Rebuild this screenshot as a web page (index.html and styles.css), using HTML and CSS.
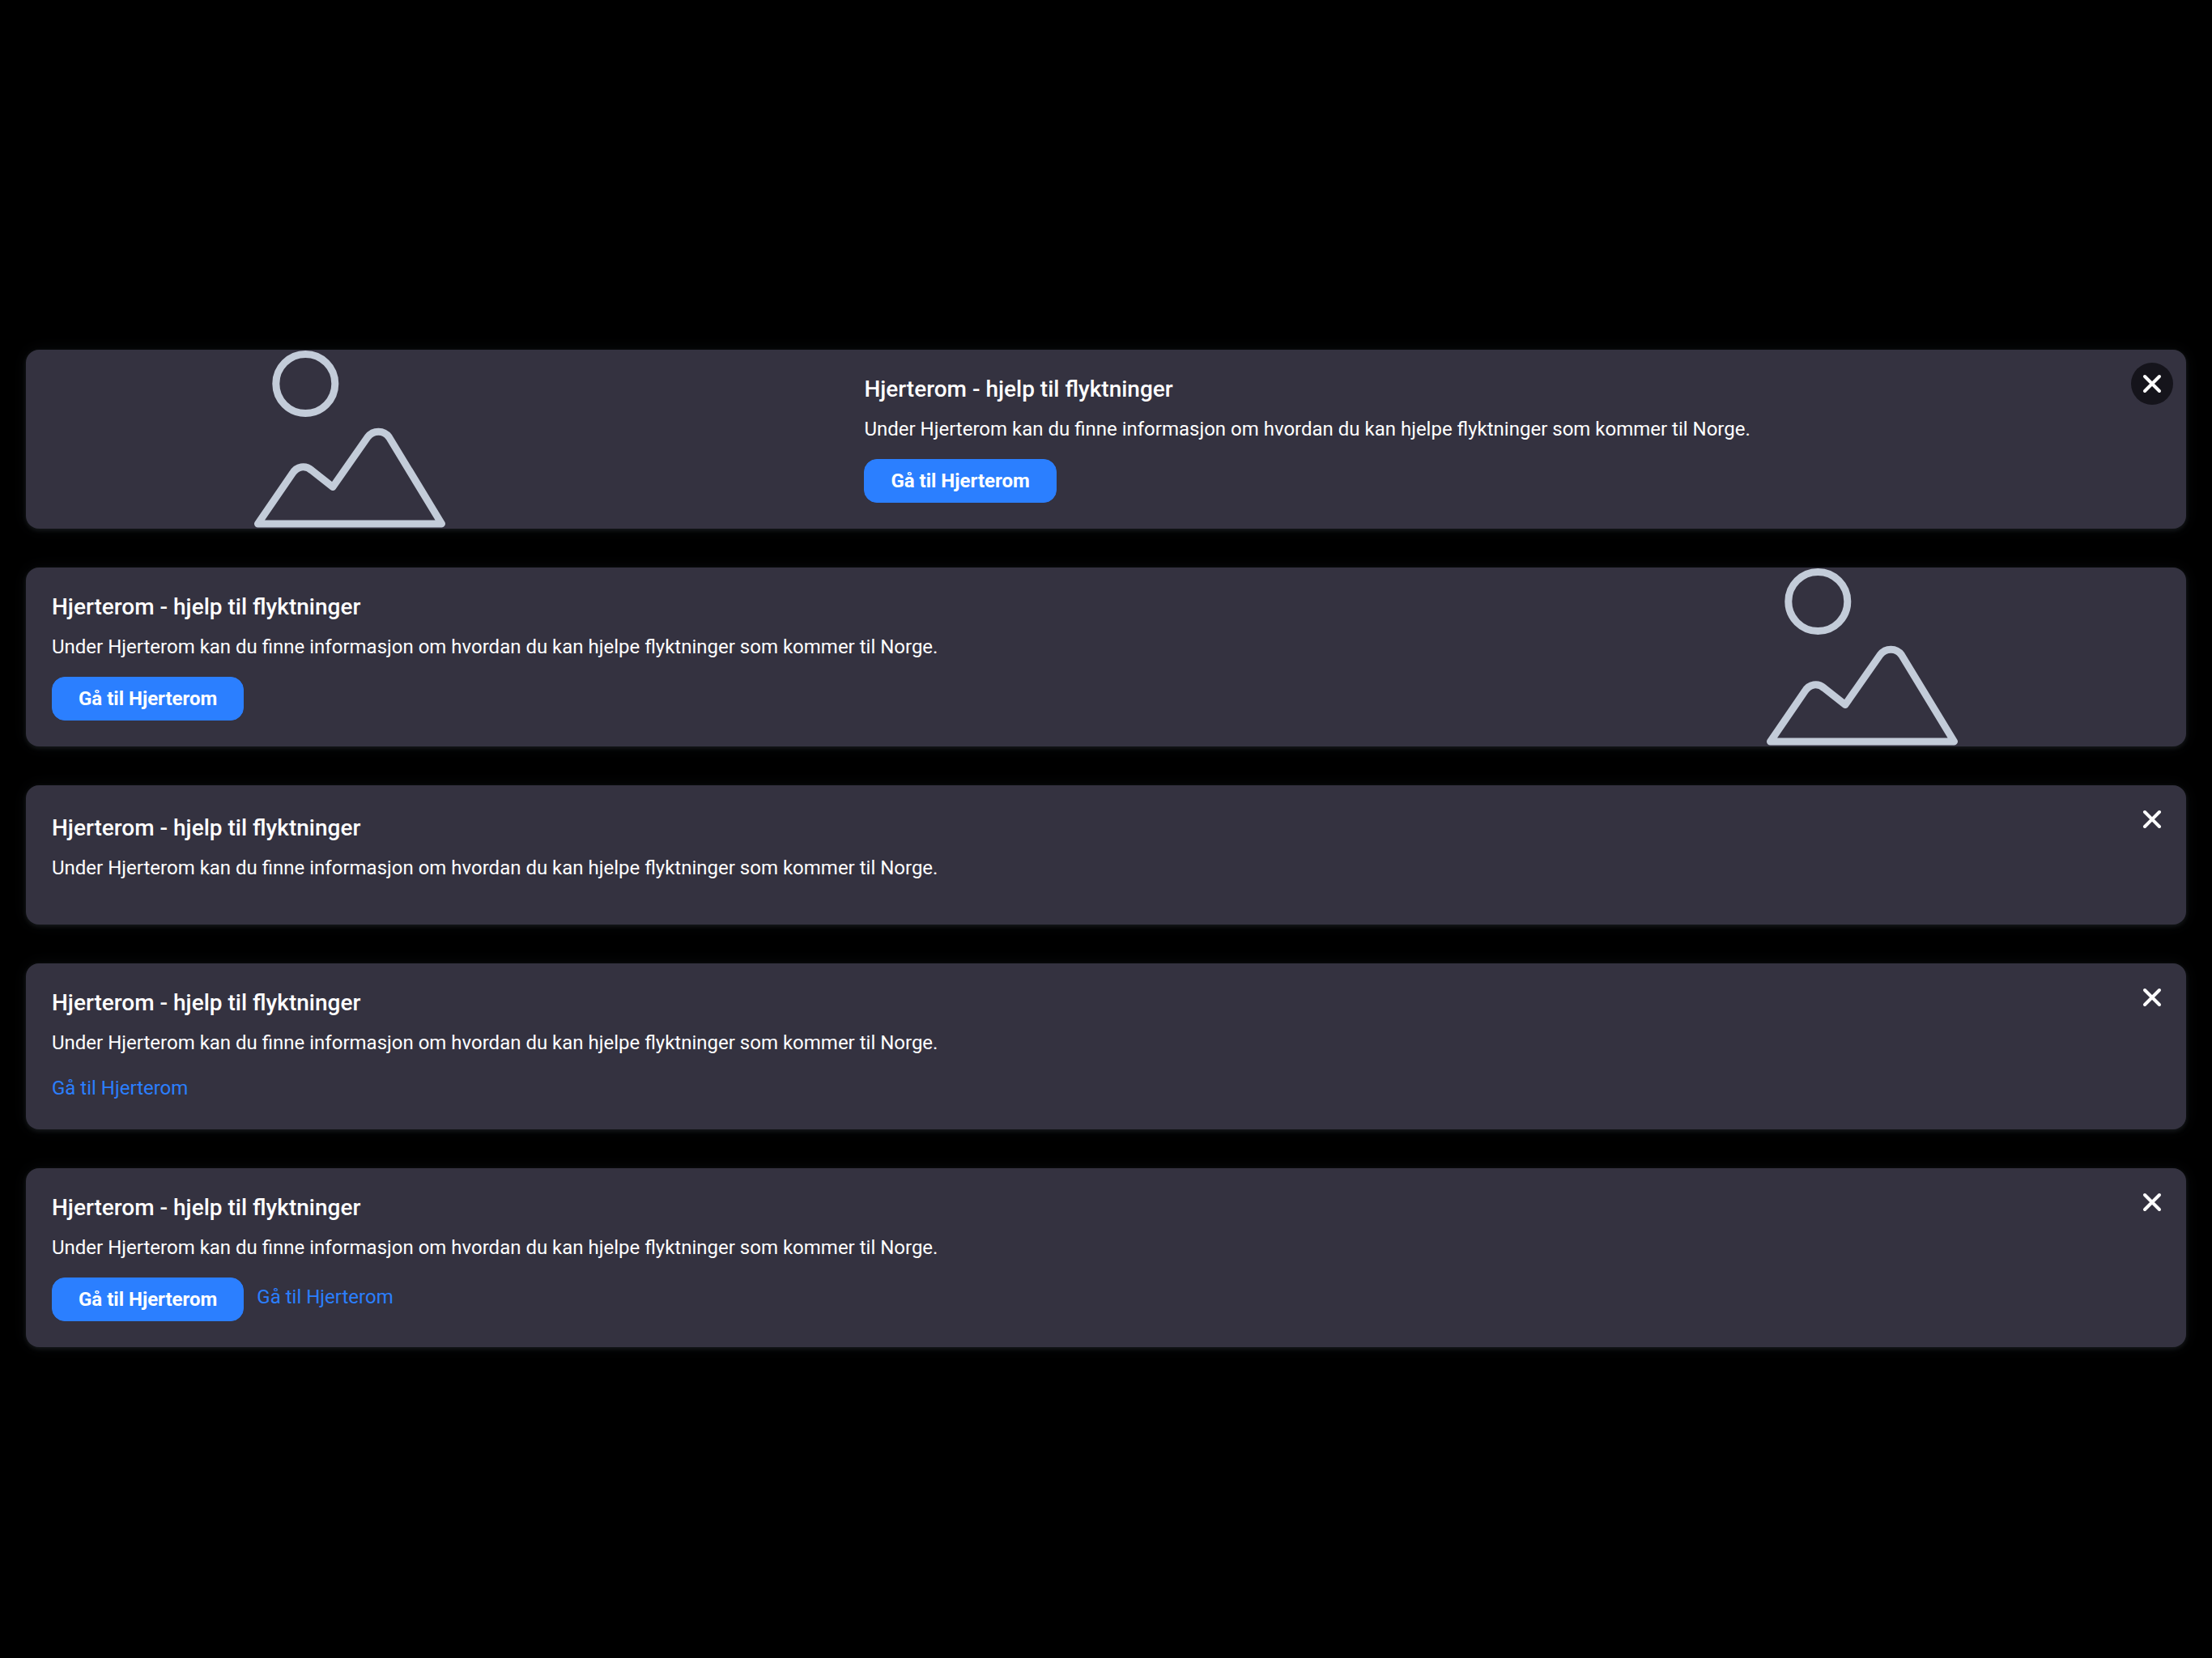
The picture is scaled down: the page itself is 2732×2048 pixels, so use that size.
FILE: index.html
```html
<!DOCTYPE html>
<html lang="nb">
<head>
<meta charset="utf-8">
<title>Hjerterom</title>
<link rel="stylesheet" href="styles.css">
</head>
<body>
<svg class="defs" aria-hidden="true">
  <symbol id="picture" viewBox="0 0 240 220">
    <g fill="none" stroke="#c3ccd9" stroke-width="9" stroke-linejoin="round">
      <circle cx="65.3" cy="42" r="36.5"/>
      <path d="M6.5 215 L49 153 C54.5 144 65 142 73 149 L99 169.5 L142 108 C149 99 162 99 168.5 108 L233.5 215 Z"/>
    </g>
  </symbol>
  <symbol id="cross" viewBox="0 0 24 24">
    <path d="M3 3 L21 21 M21 3 L3 21" fill="none" stroke="#fff" stroke-width="4" stroke-linecap="round"/>
  </symbol>
</svg>
<main class="page">
  <article class="card">
    <div class="media"><svg class="picture" aria-hidden="true"><use href="#picture"/></svg></div>
    <div class="content content-inset">
      <h2 class="title">Hjerterom - hjelp til flyktninger</h2>
      <p class="text">Under Hjerterom kan du finne informasjon om hvordan du kan hjelpe flyktninger som kommer til Norge.</p>
      <div class="actions"><button class="button" type="button">Gå til Hjerterom</button></div>
    </div>
    <button class="close close-filled" type="button" aria-label="Lukk"><svg class="cross" aria-hidden="true"><use href="#cross"/></svg></button>
  </article>
  <article class="card">
    <div class="content">
      <h2 class="title">Hjerterom - hjelp til flyktninger</h2>
      <p class="text">Under Hjerterom kan du finne informasjon om hvordan du kan hjelpe flyktninger som kommer til Norge.</p>
      <div class="actions"><button class="button" type="button">Gå til Hjerterom</button></div>
    </div>
    <div class="media"><svg class="picture" aria-hidden="true"><use href="#picture"/></svg></div>
  </article>
  <article class="card">
    <div class="content content-plain">
      <h2 class="title">Hjerterom - hjelp til flyktninger</h2>
      <p class="text">Under Hjerterom kan du finne informasjon om hvordan du kan hjelpe flyktninger som kommer til Norge.</p>
    </div>
    <button class="close" type="button" aria-label="Lukk"><svg class="cross" aria-hidden="true"><use href="#cross"/></svg></button>
  </article>
  <article class="card">
    <div class="content">
      <h2 class="title">Hjerterom - hjelp til flyktninger</h2>
      <p class="text">Under Hjerterom kan du finne informasjon om hvordan du kan hjelpe flyktninger som kommer til Norge.</p>
      <div class="actions"><a class="link" href="#">Gå til Hjerterom</a></div>
    </div>
    <button class="close" type="button" aria-label="Lukk"><svg class="cross" aria-hidden="true"><use href="#cross"/></svg></button>
  </article>
  <article class="card">
    <div class="content">
      <h2 class="title">Hjerterom - hjelp til flyktninger</h2>
      <p class="text">Under Hjerterom kan du finne informasjon om hvordan du kan hjelpe flyktninger som kommer til Norge.</p>
      <div class="actions"><button class="button" type="button">Gå til Hjerterom</button><a class="link link-beside" href="#">Gå til Hjerterom</a></div>
    </div>
    <button class="close" type="button" aria-label="Lukk"><svg class="cross" aria-hidden="true"><use href="#cross"/></svg></button>
  </article>
</main>
</body>
</html>
```

FILE: styles.css
```css
* { box-sizing: border-box; }

body {
  margin: 0;
  background: #000;
  color: #fff;
  font: 24px/30px Roboto, "Liberation Sans", sans-serif;
}

.defs { display: none; }

.page {
  min-height: 100vh;
  padding: 48px 32px 0;
  display: flex;
  flex-direction: column;
  justify-content: center;
  gap: 48px;
}

.card {
  position: relative;
  display: flex;
  background: #343240;
  border-radius: 16px;
  box-shadow: 0 2px 6px rgba(174, 194, 217, 0.12), 0 0 20px rgba(174, 194, 217, 0.06);
}

.media {
  flex: 0 0 30%;
  display: flex;
  justify-content: center;
}

.picture { width: 240px; height: 220px; }

.content { flex: 1; padding: 32px; }
.content-inset { padding-left: 235px; }
.content-plain { padding: 36px 32px 55px; }

.title {
  margin: 0 0 17px;
  font-size: 28px;
  line-height: 34px;
  font-weight: 500;
}

.text { margin: 0; }

.actions {
  display: flex;
  align-items: flex-start;
  gap: 16px;
  margin-top: 22px;
}

.button {
  height: 54px;
  padding: 0 32px;
  border: 1px solid #2b7fff;
  border-radius: 16px;
  background: #2b7fff;
  color: #fff;
  font: bold 24px/32px Roboto, "Liberation Sans", sans-serif;
}

.link {
  color: #2b7fff;
  line-height: 38px;
  text-decoration: none;
}
.link-beside { line-height: 48px; }

.close {
  position: absolute;
  top: 16px;
  right: 16px;
  width: 52px;
  height: 52px;
  padding: 0;
  border: 0;
  border-radius: 50%;
  background: transparent;
  display: grid;
  place-items: center;
}
.close-filled { background: #15141b; }

.cross { width: 24px; height: 24px; }
```
